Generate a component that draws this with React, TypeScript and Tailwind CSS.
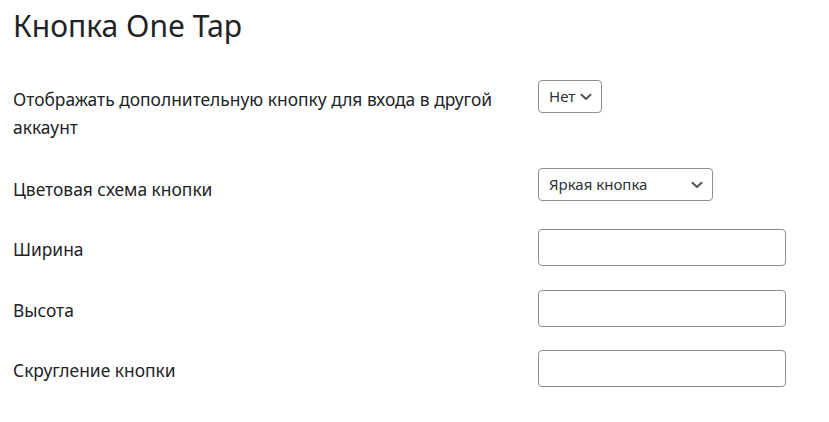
import React from "react";

const Chevron = () => (
  <svg width="12" height="8" viewBox="0 0 12 8" className="shrink-0">
    <path d="M1.5 1.8 L6 6 L10.5 1.8" fill="none" stroke="#50575e" strokeWidth="2" strokeLinecap="round" strokeLinejoin="round" />
  </svg>
);

export default function App() {
  const font = { fontFamily: '"Noto Sans", "Open Sans", sans-serif' };
  return (
    <div className="bg-white w-[829px] h-[422px] overflow-hidden text-[#1d2327]" style={font}>
      <div className="px-[13px]">
        <h1 className="text-[30px] leading-[40px] font-normal mt-[6px]">Кнопка One Tap</h1>

        <div className="grid grid-cols-[525px_1fr] items-start mt-[34px]">
          <div className="text-[17.4px] leading-[28px] pt-[5px]">
            Отображать дополнительную кнопку для входа в другой аккаунт
          </div>
          <div>
            <div className="inline-flex items-center gap-[5px] h-[33px] border border-[#8c8f94] rounded-[4px] pl-[10px] pr-[9px] text-[15px] text-[#2c3338]">
              <span>Нет</span>
              <Chevron />
            </div>
          </div>
        </div>

        <div className="grid grid-cols-[525px_1fr] items-start mt-[27px]">
          <div className="text-[17.4px] leading-[28px] pt-[7px]">Цветовая схема кнопки</div>
          <div>
            <div className="flex items-center justify-between w-[175px] h-[33px] border border-[#8c8f94] rounded-[4px] pl-[10px] pr-[9px] text-[15px] text-[#2c3338]">
              <span>Яркая кнопка</span>
              <Chevron />
            </div>
          </div>
        </div>

        <div className="grid grid-cols-[525px_1fr] items-start mt-[26px]">
          <div className="text-[17.4px] leading-[28px] pt-[6px]">Ширина</div>
          <div className="w-[248px] h-[37px] border border-[#8c8f94] rounded-[4px] bg-white" />
        </div>

        <div className="grid grid-cols-[525px_1fr] items-start mt-[24px]">
          <div className="text-[17.4px] leading-[28px] pt-[6px]">Высота</div>
          <div className="w-[248px] h-[37px] border border-[#8c8f94] rounded-[4px] bg-white" />
        </div>

        <div className="grid grid-cols-[525px_1fr] items-start mt-[23px]">
          <div className="text-[17.4px] leading-[28px] pt-[6px]">Скругление кнопки</div>
          <div className="w-[248px] h-[37px] border border-[#8c8f94] rounded-[4px] bg-white" />
        </div>
      </div>
    </div>
  );
}
